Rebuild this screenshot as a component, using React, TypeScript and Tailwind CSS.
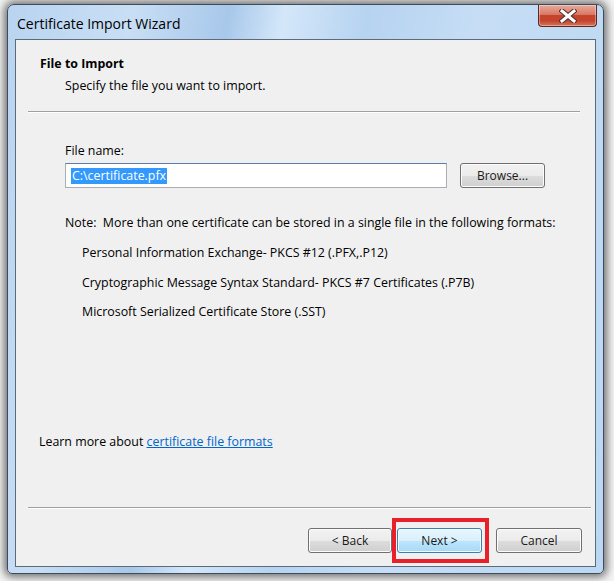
const font = { fontFamily: '"Segoe UI", "Open Sans", "Noto Sans", sans-serif' };

function WinButton({ label, primary = false, w = 'w-[85px]' }: { label: string; primary?: boolean; w?: string }) {
  return (
    <button
      className={
        primary
          ? `h-[25px] ${w} rounded-[3px] border border-[#3c7fb1] bg-[linear-gradient(#eaf6fd_0%,#d9f0fc_50%,#bee6fd_51%,#a7d9f5_100%)] text-[12px] text-[#1a1a1a] shadow-[inset_0_0_0_1px_#f2fafd]`
          : `h-[25px] ${w} rounded-[3px] border border-[#707070] bg-[linear-gradient(#f2f2f2_0%,#ebebeb_50%,#dddddd_51%,#cfcfcf_100%)] text-[12px] text-[#1a1a1a] shadow-[inset_0_0_0_1px_#fcfcfc]`
      }
    >
      {label}
    </button>
  );
}

function Separator({ right }: { right: string }) {
  return <div className={`ml-[12px] ${right} border-t border-b border-t-[#a0a0a0] border-b-white`} />;
}

export default function App() {
  return (
    <div className="h-[581px] w-[614px] overflow-hidden bg-[#f4f4f4] pl-[7px] pt-[4px]" style={font}>
      <div className="flex h-[570px] w-[597px] flex-col rounded-t-[7px] rounded-b-[5px] border border-[#3d4c5c] bg-[linear-gradient(100deg,#b9d4f0_0%,#c8def5_18%,#a8c8ea_32%,#d4e7f9_40%,#b6d3f0_52%,#c6ddf5_68%,#bbd7f2_100%)] shadow-[0_0_9px_3px_rgba(0,0,0,0.55)]">
        {/* title bar */}
        <div className="flex h-[34px] items-start justify-between">
          <div className="pl-[9px] pt-[9px] text-[14px] leading-[20px] text-black">Certificate Import Wizard</div>
          <div className="mr-[6px] flex h-[22px] w-[59px] items-center justify-center rounded-b-[4px] border border-t-0 border-[#5a2a22] bg-[linear-gradient(#e9a899_0%,#d87a66_45%,#c7432a_50%,#c2452e_75%,#d9745a_100%)] shadow-[inset_0_0_0_1px_rgba(255,255,255,0.35)]">
            <svg width="18" height="14" viewBox="0 0 18 14">
              <path d="M3 2 L15 12 M15 2 L3 12" stroke="#4a3030" strokeWidth="5" strokeLinecap="square" />
              <path d="M3 2 L15 12 M15 2 L3 12" stroke="#ffffff" strokeWidth="3" strokeLinecap="square" />
            </svg>
          </div>
        </div>
        {/* client area */}
        <div className="mx-[7px] mb-[6px] flex flex-1 flex-col border border-[#5b6b7b] bg-[#f0f0f0] text-[12.4px] leading-[16px] text-black">
          <div className="pl-[24px] pt-[16px] font-bold">File to Import</div>
          <div className="pl-[49px] pt-[6px]">Specify the file you want to import.</div>
          <div className="pt-[17px]">
            <Separator right="mr-[15px]" />
          </div>

          <div className="pl-[49px] pt-[30px]">File name:</div>
          <div className="flex items-center gap-[13px] pl-[49px] pt-[4px]">
            <div className="flex h-[25px] w-[382px] items-center border border-[#abadb3] border-t-[#5c7fa8] bg-white pl-[5px]">
              <span className="bg-[#3399ff] px-[1px] text-white">C:\certificate.pfx</span>
            </div>
            <WinButton label="Browse..." />
          </div>

          <div className="pl-[49px] pt-[27px]">Note:&nbsp; More than one certificate can be stored in a single file in the following formats:</div>
          <div className="flex flex-col gap-[13.5px] pl-[66px] pt-[14px]">
            <div>Personal Information Exchange- PKCS #12 (.PFX,.P12)</div>
            <div>Cryptographic Message Syntax Standard- PKCS #7 Certificates (.P7B)</div>
            <div>Microsoft Serialized Certificate Store (.SST)</div>
          </div>

          <div className="flex-1" />
          <div className="pl-[23px]">
            Learn more about{' '}
            <a className="text-[#0066cc] underline" href="#">
              certificate file formats
            </a>
          </div>
          <div className="pt-[57px]">
            <Separator right="mr-[4px]" />
          </div>
          <div className="flex items-center justify-end gap-[5px] pb-[13px] pr-[13px] pt-[19px]">
            <WinButton label="< Back" w="w-[84px]" />
            <div className="relative">
              <WinButton label="Next >" primary />
              <div className="pointer-events-none absolute -bottom-[10px] -left-[5px] -right-[7px] -top-[10px] border-[4px] border-[#e8202a]" />
            </div>
            <div className="w-[4px]" />
            <WinButton label="Cancel" w="w-[86px]" />
          </div>
        </div>
      </div>
    </div>
  );
}
